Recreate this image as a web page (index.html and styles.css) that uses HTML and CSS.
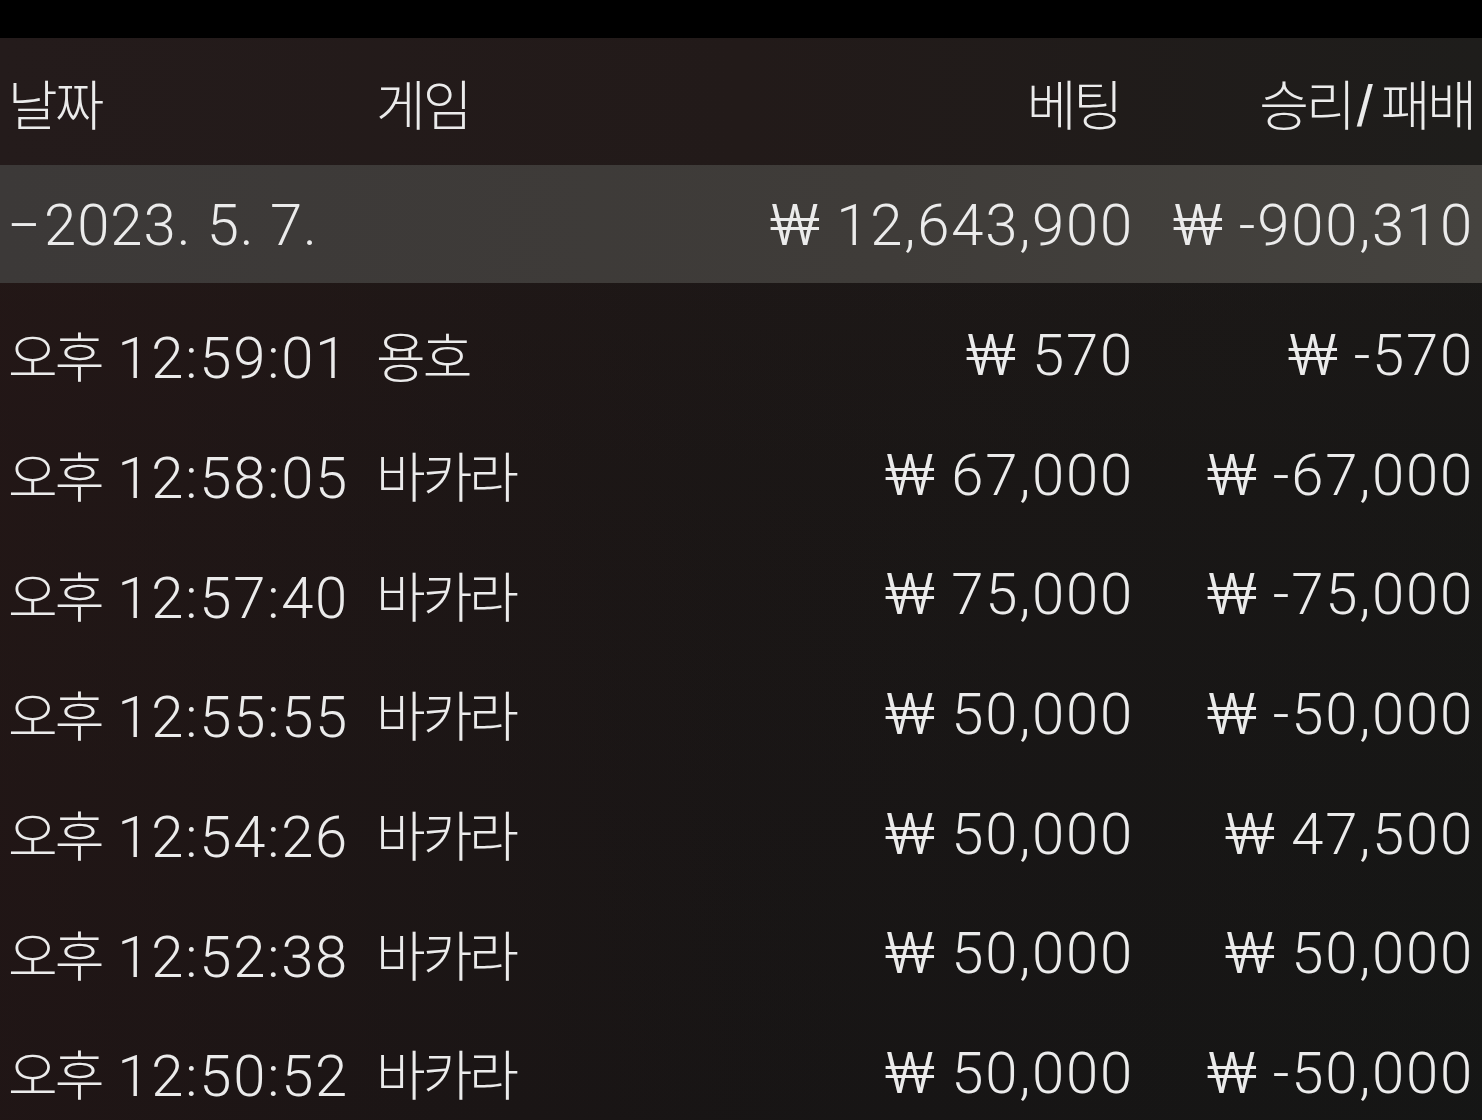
FILE: index.html
```html
<!DOCTYPE html>
<html lang="ko">
<head>
<meta charset="utf-8">
<link rel="stylesheet" href="styles.css">
</head>
<body>
<div class="topbar"></div>
<div class="sheet">
  <div class="row head">
    <div class="c1"><span class="ko">날짜</span></div>
    <div class="c2"><span class="ko">게임</span></div>
    <div class="c3 hbet"><span class="ko">베팅</span></div>
    <div class="c4"><span class="ko">승리</span><span class="slash">/</span><span class="ko">패배</span></div>
  </div>
  <div class="row date">
    <div class="c1"><span class="dash">–</span>2023. 5. 7.</div>
    <div class="c2"></div>
    <div class="c3"><span class="won">₩</span> 12,643,900</div>
    <div class="c4"><span class="won">₩</span> -900,310</div>
  </div>
  <div class="list">
    <div class="row item">
      <div class="c1"><span class="ko">오후</span> 12:59:01</div>
      <div class="c2"><span class="ko">용호</span></div>
      <div class="c3"><span class="won">₩</span> 570</div>
      <div class="c4"><span class="won">₩</span> -570</div>
    </div>
    <div class="row item">
      <div class="c1"><span class="ko">오후</span> 12:58:05</div>
      <div class="c2"><span class="ko">바카라</span></div>
      <div class="c3"><span class="won">₩</span> 67,000</div>
      <div class="c4"><span class="won">₩</span> -67,000</div>
    </div>
    <div class="row item">
      <div class="c1"><span class="ko">오후</span> 12:57:40</div>
      <div class="c2"><span class="ko">바카라</span></div>
      <div class="c3"><span class="won">₩</span> 75,000</div>
      <div class="c4"><span class="won">₩</span> -75,000</div>
    </div>
    <div class="row item">
      <div class="c1"><span class="ko">오후</span> 12:55:55</div>
      <div class="c2"><span class="ko">바카라</span></div>
      <div class="c3"><span class="won">₩</span> 50,000</div>
      <div class="c4"><span class="won">₩</span> -50,000</div>
    </div>
    <div class="row item">
      <div class="c1"><span class="ko">오후</span> 12:54:26</div>
      <div class="c2"><span class="ko">바카라</span></div>
      <div class="c3"><span class="won">₩</span> 50,000</div>
      <div class="c4"><span class="won">₩</span> 47,500</div>
    </div>
    <div class="row item">
      <div class="c1"><span class="ko">오후</span> 12:52:38</div>
      <div class="c2"><span class="ko">바카라</span></div>
      <div class="c3"><span class="won">₩</span> 50,000</div>
      <div class="c4"><span class="won">₩</span> 50,000</div>
    </div>
    <div class="row item">
      <div class="c1"><span class="ko">오후</span> 12:50:52</div>
      <div class="c2"><span class="ko">바카라</span></div>
      <div class="c3"><span class="won">₩</span> 50,000</div>
      <div class="c4"><span class="won">₩</span> -50,000</div>
    </div>
  </div>
</div>
</body>
</html>
```

FILE: styles.css
```css
html, body {
  margin: 0;
  padding: 0;
}
body {
  width: 1482px;
  height: 1120px;
  overflow: hidden;
  background: #000;
  font-family: "Roboto", "Liberation Sans", "Noto Sans CJK KR", sans-serif;
  font-weight: 300;
  color: #ebebeb;
  font-size: 58px;
}
.topbar {
  height: 38px;
  background: #000;
}
.sheet {
  height: 1082px;
  background:
    linear-gradient(90deg, rgba(40, 22, 22, 0.55) 0%, rgba(30, 20, 20, 0.2) 50%, rgba(20, 24, 22, 0.3) 100%),
    linear-gradient(180deg, #201a19 0%, #1a1716 40%, #161515 100%);
}
.row {
  display: grid;
  grid-template-columns: 368px 1fr 400px 340px;
  padding: 0 8px 0 8px;
  align-items: center;
  white-space: nowrap;
  letter-spacing: 1.8px;
}
.c3, .c4 {
  text-align: right;
}
.ko {
  font-family: "Noto Sans CJK KR", sans-serif;
  font-size: 54px;
  font-weight: 300;
  letter-spacing: -3px;
}
.won {
  display: inline-block;
  transform: scaleX(1.15);
  transform-origin: right center;
  letter-spacing: 0;
}
.date .c1 {
  letter-spacing: 1px;
}
.dash {
  display: inline-block;
  width: 36px;
  letter-spacing: 0;
  transform: scaleX(0.85);
  transform-origin: left center;
}
.slash {
  font-family: "Liberation Sans", sans-serif;
  font-weight: 400;
  margin: 0 6px 0 4px;
}
.head {
  height: 127px;
  background: linear-gradient(90deg, #241b1b 0%, #221a19 50%, #1e1d1b 100%);
  padding-top: 2px;
  box-sizing: border-box;
}
.hbet {
  padding-right: 14px;
}
.date {
  height: 118px;
  background: linear-gradient(90deg, #3c3938 0%, #3f3c39 60%, #45433f 100%);
  padding-top: 2px;
  box-sizing: border-box;
}
.list {
  padding-top: 12px;
}
.item {
  height: 119.7px;
}
```
